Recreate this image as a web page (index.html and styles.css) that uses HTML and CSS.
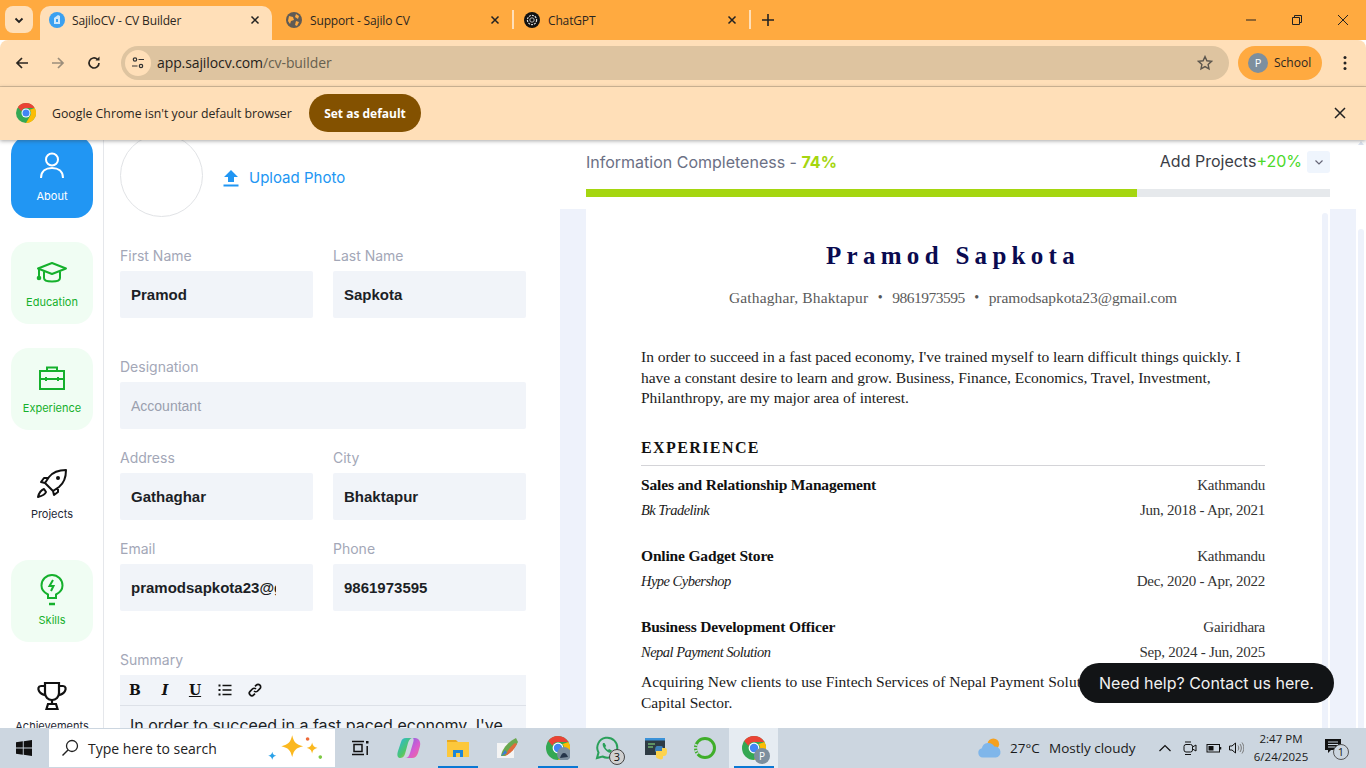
FILE: index.html
```html
<!DOCTYPE html>
<html lang="en">
<head>
<meta charset="utf-8">
<title>SajiloCV - CV Builder</title>
<link rel="stylesheet" href="styles.css">
</head>
<body>
<div class="app">
  <header class="tabstrip">
    <div class="tablist-btn"><svg width="12" height="12" viewBox="0 0 12 12"><path d="M2.5 4.5 6 8l3.5-3.5" fill="none" stroke="#222" stroke-width="1.8"/></svg></div>
    <div class="tab tab-active">
      <svg class="favicon" viewBox="0 0 16 16"><circle cx="8" cy="8" r="8" fill="#3aa0f0"/><path d="M5 12V6l4-3 2 1v8z" fill="#cfe8fb"/><path d="M7 7h2v3H7z" fill="#3aa0f0"/></svg>
      <span class="tab-title">SajiloCV - CV Builder</span>
      <svg class="tab-x" viewBox="0 0 10 10"><path d="M1.5 1.5l7 7M8.5 1.5l-7 7" stroke="#222" stroke-width="1.5"/></svg>
    </div>
    <div class="tab">
      <svg class="favicon" viewBox="0 0 16 16"><circle cx="8" cy="8" r="8" fill="#5f5b55"/><path d="M3 4l4 1 1 3-3 1-1 3-2-3zM10 2l3 2-1 3-3-2zM10 9l3 1-2 4-2-1z" fill="#ffaa40"/></svg>
      <span class="tab-title">Support - Sajilo CV</span>
      <svg class="tab-x" viewBox="0 0 10 10"><path d="M1.5 1.5l7 7M8.5 1.5l-7 7" stroke="#222" stroke-width="1.5"/></svg>
    </div>
    <span class="tab-sep"></span>
    <div class="tab">
      <svg class="favicon" viewBox="0 0 16 16"><circle cx="8" cy="8" r="8" fill="#111"/><circle cx="8" cy="8" r="4.6" fill="none" stroke="#ddd" stroke-width="1.2" stroke-dasharray="2 1"/><circle cx="8" cy="8" r="2.2" fill="none" stroke="#bbb"/></svg>
      <span class="tab-title">ChatGPT</span>
      <svg class="tab-x" viewBox="0 0 10 10"><path d="M1.5 1.5l7 7M8.5 1.5l-7 7" stroke="#222" stroke-width="1.5"/></svg>
    </div>
    <span class="tab-sep"></span>
    <svg class="new-tab" viewBox="0 0 12 12"><path d="M6 0v12M0 6h12" stroke="#222" stroke-width="1.6"/></svg>
    <div class="win-controls">
      <svg viewBox="0 0 12 12"><path d="M1 6h10" stroke="#222" stroke-width="1"/></svg>
      <svg viewBox="0 0 12 12"><path d="M1.5 3.5h7v7h-7zM3.5 3.5v-2h7v7h-2" fill="none" stroke="#222" stroke-width="1"/></svg>
      <svg viewBox="0 0 12 12"><path d="M1 1l10 10M11 1 1 11" stroke="#222" stroke-width="1"/></svg>
    </div>
  </header>

  <div class="toolbar">
    <svg class="tool-icon" viewBox="0 0 16 16"><path d="M14 8H3M8 3 3 8l5 5" fill="none" stroke="#2b2620" stroke-width="1.7"/></svg>
    <svg class="tool-icon" viewBox="0 0 16 16"><path d="M2 8h11M8 3l5 5-5 5" fill="none" stroke="#9c8e7b" stroke-width="1.7"/></svg>
    <svg class="tool-icon" viewBox="0 0 16 16"><path d="M13 8a5 5 0 1 1-1.6-3.7" fill="none" stroke="#2b2620" stroke-width="1.7"/><path d="M13.5 1.5v4h-4z" fill="#2b2620"/></svg>
    <div class="omnibox">
      <span class="site-btn"><svg width="14" height="14" viewBox="0 0 14 14"><circle cx="4" cy="3.5" r="1.7" fill="none" stroke="#333" stroke-width="1.2"/><path d="M7.5 3.5H13M1 10h5.5" stroke="#333" stroke-width="1.2"/><circle cx="10" cy="10" r="1.7" fill="none" stroke="#333" stroke-width="1.2"/></svg></span>
      <span class="url"><b>app.sajilocv.com</b>/cv-builder</span>
      <svg class="star" viewBox="0 0 16 16"><path d="M8 1.6l1.9 4.2 4.6.5-3.4 3.1.9 4.5L8 11.6l-4 2.3.9-4.5L1.5 6.3l4.6-.5z" fill="none" stroke="#5c564d" stroke-width="1.4"/></svg>
    </div>
    <div class="profile-chip"><span class="avatar-p">P</span><span>School</span></div>
    <svg class="kebab" viewBox="0 0 4 16"><circle cx="2" cy="2.5" r="1.5" fill="#222"/><circle cx="2" cy="8" r="1.5" fill="#222"/><circle cx="2" cy="13.5" r="1.5" fill="#222"/></svg>
  </div>

  <div class="infobar">
    <svg class="chrome-logo" viewBox="0 0 24 24"><circle cx="12" cy="12" r="12" fill="#34a853"/><path d="M12 0a12 12 0 0 1 10.4 6H12a6 6 0 0 0-5.6 3.8L2.2 5A12 12 0 0 1 12 0z" fill="#ea4335"/><path d="M22.4 6A12 12 0 0 1 12 24l5.2-9A6 6 0 0 0 16.5 8z" fill="#fbbc04"/><circle cx="12" cy="12" r="5.4" fill="#fff"/><circle cx="12" cy="12" r="4.2" fill="#4285f4"/></svg>
    <span class="info-text">Google Chrome isn't your default browser</span>
    <span class="default-btn">Set as default</span>
    <svg class="info-x" viewBox="0 0 12 12"><path d="M1 1l10 10M11 1 1 11" stroke="#222" stroke-width="1.5"/></svg>
  </div>

  <main class="main">
    <nav class="sidenav">
      <a class="nav-item nav-active">
        <svg viewBox="0 0 32 32"><circle cx="16" cy="9.5" r="6" fill="none" stroke="#fff" stroke-width="2"/><path d="M5 28c0-7 5-10 11-10s11 3 11 10" fill="none" stroke="#fff" stroke-width="2"/></svg>
        <span>About</span>
      </a>
      <a class="nav-item nav-done">
        <svg viewBox="0 0 32 32"><path d="M16 7 30 12.5 16 18 2 12.5z" fill="none" stroke="#15b02c" stroke-width="2" stroke-linejoin="round"/><path d="M8 15.5V22c0 2.5 4 3.5 8 3.5s8-1 8-3.500v-6.500" fill="none" stroke="#15b02c" stroke-width="2"/><path d="M3 13v7" stroke="#15b02c" stroke-width="2"/><circle cx="3" cy="22" r="2.3" fill="#15b02c"/></svg>
        <span>Education</span>
      </a>
      <a class="nav-item nav-done">
        <svg viewBox="0 0 32 32"><rect x="4" y="9" width="24" height="18" fill="none" stroke="#15b02c" stroke-width="2"/><path d="M11 9V5.5h10V9M4 17h24M10 15v4M22 15v4" fill="none" stroke="#15b02c" stroke-width="2"/></svg>
        <span>Experience</span>
      </a>
      <a class="nav-item">
        <svg viewBox="0 0 32 32"><path d="M30 2c-8 0-13 2-17 7l-4 6 8 8 6-4c5-4 7-9 7-17zM13 10H8l-3 4 4 1M22 19v5l-4 3-1-4" fill="none" stroke="#111" stroke-width="2" stroke-linejoin="round"/><circle cx="22" cy="10" r="2" fill="#111"/><path d="M8 21c-3 1-5 4-6 8 4-1 7-2 8-5z" fill="none" stroke="#111" stroke-width="2" stroke-linejoin="round"/></svg>
        <span>Projects</span>
      </a>
      <a class="nav-item nav-done">
        <svg viewBox="0 0 32 32"><path d="M12 24v-3.500C8 18.500 5.500 15 5.500 11.500a10.500 10.500 0 0 1 21 0c0 3.500-2.500 7-6.500 9V24z" fill="none" stroke="#15b02c" stroke-width="2"/><path d="M17 6l-3.500 6h4L15 17" fill="none" stroke="#15b02c" stroke-width="2"/><path d="M13 30h6" stroke="#15b02c" stroke-width="2.5"/></svg>
        <span>Skills</span>
      </a>
      <a class="nav-item">
        <svg viewBox="0 0 32 32"><path d="M9 3h14v10c0 4-3 7-7 7s-7-3-7-7z" fill="none" stroke="#111" stroke-width="2.2"/><path d="M9 6H5C2 6 2 9 3 11c1 2 4 4 6 4M23 6h4c3 0 3 3 2 5-1 2-4 4-6 4M16 20v4M12 24h8l1.5 5h-11z" fill="none" stroke="#111" stroke-width="2.2"/></svg>
        <span>Achievements</span>
      </a>
    </nav>

    <section class="form-col">
      <div class="photo-row">
        <div class="photo"></div>
        <div class="upload">
          <svg viewBox="0 0 16 18"><path d="M8 1 1 8h4v5h6V8h4zM.5 15.500h15v2H.5z" fill="#2196f3"/></svg>
          <span>Upload Photo</span>
        </div>
      </div>
      <div class="field-row">
        <div class="field"><label class="lbl">First Name</label><div class="val">Pramod</div></div>
        <div class="field"><label class="lbl">Last Name</label><div class="val">Sapkota</div></div>
      </div>
      <div class="field field-spaced"><label class="lbl">Designation</label><div class="val val-empty">Accountant</div></div>
      <div class="field-row">
        <div class="field"><label class="lbl">Address</label><div class="val">Gathaghar</div></div>
        <div class="field"><label class="lbl">City</label><div class="val">Bhaktapur</div></div>
      </div>
      <div class="field-row">
        <div class="field"><label class="lbl">Email</label><div class="val val-clip"><span>pramodsapkota23@gmail.com</span></div></div>
        <div class="field"><label class="lbl">Phone</label><div class="val">9861973595</div></div>
      </div>
      <div class="field field-spaced">
        <label class="lbl">Summary</label>
        <div class="editor">
          <div class="editor-tools">
            <span class="et et-b">B</span><span class="et et-i">I</span><span class="et et-u">U</span>
            <svg class="et-svg" viewBox="0 0 14 14"><path d="M4.5 2.5h9M4.500 7h9M4.500 11.500h9" stroke="#111" stroke-width="1.6"/><path d="M.5 2.500h2M.5 7h2M.5 11.500h2" stroke="#111" stroke-width="1.9"/></svg>
            <svg class="et-svg" viewBox="0 0 14 14"><path d="M6 8a2.500 2.500 0 0 0 3.600 0l2.300-2.300a2.500 2.500 0 0 0-3.600-3.600L7 3.400M8 6a2.500 2.500 0 0 0-3.600 0L2.100 8.300a2.500 2.500 0 0 0 3.600 3.600L7 10.600" fill="none" stroke="#111" stroke-width="1.7"/></svg>
          </div>
          <div class="editor-body">In order to succeed in a fast paced economy, I've</div>
        </div>
      </div>
    </section>

    <section class="preview">
      <div class="progress-head">
        <div class="progress-row">
          <div class="completeness">Information Completeness - <b>74%</b></div>
          <div class="next-step">
            <span>Add Projects</span><span class="plus">+20%</span>
            <span class="chev"><svg width="10" height="10" viewBox="0 0 10 10"><path d="M1.5 3.500 5 7l3.500-3.500" fill="none" stroke="#667" stroke-width="1.2"/></svg></span>
          </div>
        </div>
        <div class="bar"><div class="bar-fill" style="width:74%"></div></div>
      </div>
      <div class="paper-wrap">
        <article class="paper">
          <h1 class="cv-name">Pramod Sapkota</h1>
          <p class="cv-contact"><span class="c-addr">Gathaghar, Bhaktapur</span><i>•</i><span class="c-digits">9861973595</span><i>•</i><span class="c-mail">pramodsapkota23@gmail.com</span></p>
          <p class="cv-summary">In order to succeed in a fast paced economy, I've trained myself to learn difficult things quickly. I have a constant desire to learn and grow. Business, Finance, Economics, Travel, Investment, Philanthropy, are my major area of interest.</p>
          <h2 class="cv-section">EXPERIENCE</h2>
          <div class="job">
            <div class="job-line"><b>Sales and Relationship Management</b><span>Kathmandu</span></div>
            <div class="job-line"><em>Bk Tradelink</em><span>Jun, 2018 - Apr, 2021</span></div>
          </div>
          <div class="job">
            <div class="job-line"><b>Online Gadget Store</b><span>Kathmandu</span></div>
            <div class="job-line"><em>Hype Cybershop</em><span>Dec, 2020 - Apr, 2022</span></div>
          </div>
          <div class="job">
            <div class="job-line"><b>Business Development Officer</b><span>Gairidhara</span></div>
            <div class="job-line"><em>Nepal Payment Solution</em><span>Sep, 2024 - Jun, 2025</span></div>
            <p class="job-desc">Acquiring New clients to use Fintech Services of Nepal Payment Solution, focusing on the Banking and<br>Capital Sector.</p>
          </div>
          <div class="paper-scroll"></div>
        </article>
      </div>
      <a class="help-pill">Need help? Contact us here.</a>
    </section>
    <div class="page-scroll">
      <svg class="scroll-arrow" viewBox="0 0 8 5"><path d="M4 0l4 5H0z" fill="#dbe2f0"/></svg>
      <div class="page-thumb"></div>
    </div>
  </main>

  <footer class="taskbar">
    <svg class="win-logo" viewBox="0 0 16 16"><path d="M0 2.300 6.800 1.300V7.500H0zM7.700 1.200 16 0V7.500H7.700zM0 8.400H6.800V14.700L0 13.700zM7.700 8.400H16V16L7.700 14.800z" fill="#111"/></svg>
    <div class="searchbox">
      <svg class="search-ico" viewBox="0 0 18 18"><circle cx="11" cy="7" r="5.500" fill="none" stroke="#222" stroke-width="1.3"/><path d="M7 11 1.500 16.500" stroke="#222" stroke-width="1.5"/></svg>
      <span class="search-text">Type here to search</span>
      <svg class="sparkles" viewBox="0 0 64 32"><path d="M30 2c2 8 4 10 12 12-8 2-10 4-12 12-2-8-4-10-12-12 8-2 10-4 12-12z" fill="#fbb81f"/><path d="M52 10c1 4 2 5 6 6-4 1-5 2-6 6-1-4-2-5-6-6 4-1 5-2 6-6z" fill="#fbb81f"/><path d="M8 20c.7 3 1.500 3.800 4.500 4.500-3 .7-3.800 1.500-4.500 4.500-.7-3-1.500-3.800-4.500-4.500 3-.7 3.800-1.500 4.500-4.500z" fill="#2aa1e8"/><circle cx="47" cy="6" r="2" fill="#ee6a3a"/><circle cx="61" cy="26" r="2" fill="#7cc943"/></svg>
    </div>
    <div class="tb-icon">
      <svg viewBox="0 0 24 24"><path d="M4 5.500h12M4 18.500h12M6 8.500h8v7H6z" fill="none" stroke="#111" stroke-width="1.5"/><path d="M18 5h2.500v2.500H18z" fill="#111"/><path d="M19.200 10v9" stroke="#111" stroke-width="1.500"/></svg>
    </div>
    <div class="tb-icon">
      <svg viewBox="0 0 24 24"><defs><linearGradient id="cop" x1="0" y1="0" x2="1" y2="1"><stop offset="0" stop-color="#23b7e8"/><stop offset=".55" stop-color="#4fc66a"/><stop offset="1" stop-color="#f7c92e"/></linearGradient><linearGradient id="cop2" x1="0" y1="0" x2="1" y2="1"><stop offset="0" stop-color="#6d6be8"/><stop offset=".6" stop-color="#d85bd0"/><stop offset="1" stop-color="#f0708a"/></linearGradient></defs><path d="M9 2h7c-3 0-4 2-5 5L8 18c-1 3-3 4-5 4-3 0-3-4-2-7l3-9c1-3 2-4 5-4z" fill="url(#cop)"/><path d="M15 2h3c4 0 6 4 5 8l-2 7c-1 3-3 5-6 5H8c3 0 4-2 5-5l3-10c1-3 1-5-1-5z" fill="url(#cop2)"/></svg>
    </div>
    <div class="tb-icon tb-open">
      <svg viewBox="0 0 24 24"><path d="M1 4h9l2 2H1z" fill="#e8a820"/><rect x="1" y="6" width="22" height="15" fill="#fcc83c"/><path d="M7 21v-7h10v7h-3v-4h-4v4z" fill="#1b86d9"/></svg>
    </div>
    <div class="tb-icon tb-paint">
      <svg viewBox="0 0 24 24"><rect x="1" y="7" width="17" height="15" fill="#f4f4f4"/><path d="M5 20c1-7 7-14 15-18l2 4c-3 6-9 12-13 14z" fill="#6aa84f"/><path d="M9 20c2-5 6-10 10-13l2 1c-3 6-7 10-12 12z" fill="#e06a3a"/><path d="M5 20l4-6 2 3z" fill="#3e7bd6"/></svg>
    </div>
    <div class="tb-icon tb-open">
      <svg viewBox="0 0 24 24"><circle cx="12" cy="12" r="12" fill="#34a853"/><path d="M12 0a12 12 0 0 1 10.400 6H12a6 6 0 0 0-5.600 3.800L2.200 5A12 12 0 0 1 12 0z" fill="#ea4335"/><path d="M22.400 6A12 12 0 0 1 12 24l5.200-9A6 6 0 0 0 16.500 8z" fill="#fbbc04"/><circle cx="12" cy="12" r="5.400" fill="#fff"/><circle cx="12" cy="12" r="4.200" fill="#4285f4"/><circle cx="18" cy="18" r="7" fill="#7d8f9e"/><path d="M14 22c1-3 2-5 4-5s3 2 4 4z" fill="#26364a"/></svg>
    </div>
    <div class="tb-icon">
      <svg viewBox="0 0 24 24"><path d="M2 22l1.500-5.500A10 10 0 1 1 7.500 20.500z" fill="none" stroke="#2aa05a" stroke-width="2"/><path d="M8 7c-1 2 0 4 2 6.500s4 3.500 6 3l1-2-3-1.500-1 1c-1-.5-2-1.500-2.800-3l1-1L9.500 7z" fill="#2aa05a"/></svg>
      <span class="tb-badge">3</span>
    </div>
    <div class="tb-icon">
      <svg viewBox="0 0 24 24"><rect x="1" y="2" width="20" height="17" fill="#2e3b44"/><rect x="1" y="2" width="20" height="2.500" fill="#3a92d8"/><path d="M4 8h7M4 11h5" stroke="#6fb06f" stroke-width="1.3"/><path d="M13 10h4c2 0 2 2 2 2v3h-6c-1.500 0-2 1-2 2v1c0-4 0-8 2-8z" fill="#3c7fb8"/><path d="M12 15h6v-3h3c2 0 2 2 2 4s-1 4-3 4h-1v2c0 1-2 2-4 1s-3-1-3-3z" fill="#fcd34d"/></svg>
    </div>
    <div class="tb-icon">
      <svg viewBox="0 0 24 24"><circle cx="12" cy="12" r="9.500" fill="none" stroke="#3fae2a" stroke-width="3"/><circle cx="12" cy="12" r="9.500" fill="none" stroke="#ccd6e0" stroke-width="3.200" stroke-dasharray="1.500 1.500 1.500 1.500 1.500 1.500 1.500 50" transform="rotate(140 12 12)"/></svg>
    </div>
    <div class="tb-icon tb-open tb-current">
      <svg viewBox="0 0 24 24"><circle cx="12" cy="12" r="12" fill="#34a853"/><path d="M12 0a12 12 0 0 1 10.400 6H12a6 6 0 0 0-5.600 3.800L2.200 5A12 12 0 0 1 12 0z" fill="#ea4335"/><path d="M22.400 6A12 12 0 0 1 12 24l5.200-9A6 6 0 0 0 16.500 8z" fill="#fbbc04"/><circle cx="12" cy="12" r="5.400" fill="#fff"/><circle cx="12" cy="12" r="4.200" fill="#4285f4"/></svg>
      <span class="tb-p">P</span>
    </div>
    <div class="tray">
      <svg class="weather" viewBox="0 0 26 22"><circle cx="17" cy="7" r="6" fill="#f5a11f"/><path d="M6 21a5 5 0 0 1-1-9.800A7 7 0 0 1 18 9.500a5.800 5.800 0 0 1 1.500 11.500z" fill="#7fb6ea"/></svg>
      <span class="temp">27°C</span>
      <span class="cond">Mostly cloudy</span>
      <svg class="tray-ico tray-up" viewBox="0 0 14 14"><path d="M1.500 10 7 4.500 12.500 10" fill="none" stroke="#111" stroke-width="1.2"/></svg>
      <svg class="tray-ico" viewBox="0 0 16 16"><rect x="2" y="4.500" width="8.500" height="7.500" rx="2" fill="none" stroke="#111"/><path d="M10.500 7 14 5v6l-3.500-2M3 2h6M3 14.500h6" fill="none" stroke="#111"/></svg>
      <svg class="tray-ico tray-batt" viewBox="0 0 16 16"><rect x="1" y="4.500" width="12.500" height="7.500" fill="none" stroke="#111"/><rect x="2.500" y="6" width="5" height="4.500" fill="#111"/><path d="M14.500 7v2.500" stroke="#111" stroke-width="1.500"/></svg>
      <svg class="tray-ico tray-vol" viewBox="0 0 16 16"><path d="M1.500 6H4l3.500-3v10L4 10H1.500z" fill="none" stroke="#111"/><path d="M10 5.500c1 1.500 1 3.500 0 5M12 4c1.800 2.500 1.800 5.500 0 8M14 2.500c2.400 3.500 2.400 7.500 0 11" fill="none" stroke="#777"/></svg>
      <div class="clock"><span>2:47 PM</span><span>6/24/2025</span></div>
      <div class="notif">
        <svg viewBox="0 0 16 16"><path d="M0 1h16v11H6l-3 3v-3H0z" fill="#111"/><path d="M3 4h10M3 6.500h10M3 9h7" stroke="#ccd6e0"/></svg>
        <span class="notif-badge">1</span>
      </div>
    </div>
  </footer>
</div>
</body>
</html>
```
FILE: styles.css
```css
* { box-sizing: border-box; }
html, body { margin: 0; height: 100%; overflow: hidden; }
body { font-family: Inter, "Liberation Sans", sans-serif; background: #fff; color: #111; }
.app { display: flex; flex-direction: column; height: 768px; width: 1366px; }

/* tab strip */
.tabstrip { height: 40px; flex: none; background: #ffaa40; display: flex; align-items: flex-end; position: relative; font-family: "Open Sans", "Noto Sans", sans-serif; font-size: 12px; letter-spacing: -.15px; color: #2b2620; }
.tablist-btn { width: 28px; height: 27px; margin: 0 7px 7px 5px; border-radius: 8px; background: #ffdfb8; display: flex; align-items: center; justify-content: center; }
.tab { width: 235px; height: 34px; padding: 0 10px 6px 9px; display: flex; align-items: center; flex: none; }
.tab-active { background: #ffdfb8; border-radius: 10px 10px 0 0; width: 232px; margin-right: 5px; }
.favicon { width: 16px; height: 16px; margin-right: 8px; flex: none; }
.tab-active .favicon { margin-right: 7px; }
.tab-sep + .tab { padding-left: 10px; }
.tab-title { flex: 1; white-space: nowrap; overflow: hidden; }
.tab-x { width: 10px; height: 10px; flex: none; margin-right: 2px; }
.tab-sep { width: 2px; height: 19px; background: #ffdfb8; margin-bottom: 11px; flex: none; }
.new-tab { width: 12px; height: 12px; margin: 0 0 14px 11px; flex: none; }
.win-controls { margin-left: auto; display: flex; gap: 34px; padding-right: 17px; margin-bottom: 14px; }
.win-controls svg { width: 12px; height: 12px; }

/* toolbar */
.toolbar { height: 47px; flex: none; background: #ffdfb8; border-bottom: 1px solid #d8bd9b; display: flex; align-items: center; padding: 0 0 1px 14px; border-radius: 8px 8px 0 0; font-family: "Open Sans", "Noto Sans", sans-serif; }
.tool-icon { width: 16px; height: 16px; margin-right: 20px; flex: none; }
.tool-icon:nth-child(3) { margin-right: 19px; }
.omnibox { width: 1108px; height: 34px; background: #dec4a0; border-radius: 17px; display: flex; align-items: center; padding: 0 16px 0 4px; flex: none; }
.site-btn { width: 26px; height: 26px; border-radius: 50%; background: #ffdfb8; display: flex; align-items: center; justify-content: center; margin-right: 6px; flex: none; }
.url { font-size: 14px; color: #67604f; flex: 1; letter-spacing: -.1px; }
.url b { font-weight: 400; color: #26221b; }
.star { width: 16px; height: 16px; flex: none; }
.profile-chip { width: 84px; height: 34px; border-radius: 17px; background: #ffaa40; margin-left: 9px; display: flex; align-items: center; padding-left: 10px; gap: 6px; font-size: 12px; color: #2b2620; flex: none; }
.avatar-p { width: 20px; height: 20px; border-radius: 50%; background: #7d8f9e; color: #fff; display: flex; align-items: center; justify-content: center; font-size: 11px; }
.kebab { width: 4px; height: 16px; margin-left: 21px; flex: none; }

/* infobar */
.infobar { height: 53px; flex: none; background: #ffdfb8; display: flex; align-items: center; padding: 0 20px 1px 16px; box-shadow: 0 1px 4px rgba(60,60,60,.45); position: relative; z-index: 5; font-family: "Open Sans", "Noto Sans", sans-serif; font-size: 12.3px; color: #2b2620; }
.chrome-logo { width: 20px; height: 20px; margin-right: 16px; flex: none; }
.info-text { margin-right: 16px; white-space: nowrap; width: 241px; }
.default-btn { width: 112px; height: 38px; border-radius: 19px; background: #835100; color: #fff; font-weight: 700; font-size: 12px; display: flex; align-items: center; justify-content: center; }
.info-x { width: 12px; height: 12px; margin-left: auto; }

/* main */
.main { flex: 1; min-height: 0; display: flex; overflow: hidden; background: #fff; position: relative; }
.sidenav { width: 104px; flex: none; border-right: 1px solid #e5e7eb; padding: 0 10px 0 11px; margin-top: -4px; display: flex; flex-direction: column; gap: 24px; }
.nav-item { width: 82px; height: 82px; flex: none; border-radius: 18px; display: flex; flex-direction: column; align-items: center; justify-content: center; gap: 7px; padding-bottom: 1px; font-size: 11px; color: #1f2937; }
.nav-item svg { width: 32px; height: 32px; }
.nav-active { background: #2196f3; color: #fff; }
.nav-done { background: #f0fdf3; color: #15b02c; }

/* form */
.form-col { width: 456px; flex: none; padding: 0 34px 0 16px; margin-top: -6px; display: flex; flex-direction: column; gap: 20px; }
.photo-row { display: flex; align-items: center; margin-bottom: 10px; flex: none; }
.photo { width: 83px; height: 83px; border: 1px solid #e1e3e6; border-radius: 50%; flex: none; }
.upload { display: flex; align-items: center; gap: 10px; margin-left: 20px; font-size: 15px; color: #2196f3; padding-top: 4px; }
.upload svg { width: 16px; height: 18px; }
.field-row { display: flex; gap: 20px; flex: none; }
.field-row .field { flex: 1; min-width: 0; }
.field { flex: none; }
.field-spaced { margin-top: 20px; }
.lbl { display: block; font-size: 14px; line-height: 18px; color: #a3a7b7; margin-bottom: 6px; }
.val { height: 47px; background: #f1f4f9; border-radius: 2px; padding: 0 11px; display: flex; align-items: center; font-family: "Liberation Sans", Arial, sans-serif; font-size: 15px; font-weight: 700; color: #1c1f26; white-space: nowrap; overflow: hidden; }
.val-empty { font-weight: 400; color: #9a9fae; font-size: 14px; }
.val-clip { padding-right: 37px; }
.val-clip span { display: block; overflow: hidden; }
.editor { background: #f1f4f9; }
.editor-tools { height: 31px; border-bottom: 1px solid #dde1e8; display: flex; align-items: center; padding-left: 8px; gap: 16px; }
.et { font-family: "DejaVu Serif", serif; font-weight: 700; font-size: 14px; width: 14px; text-align: center; color: #111; }
.et-i { font-style: italic; }
.et-u { text-decoration: underline; }
.et-svg { width: 14px; height: 14px; }
.editor-body { padding: 7px 10px; font-size: 16px; line-height: 24px; color: #1c1f26; white-space: nowrap; overflow: hidden; }

/* preview */
.preview { flex: 1; min-width: 0; display: flex; flex-direction: column; position: relative; }
.progress-head { height: 69px; flex: none; padding: 0 26px; }
.progress-row { height: 44px; margin-bottom: 5px; display: flex; justify-content: space-between; align-items: center; }
.completeness { font-size: 16px; color: #6b7085; }
.completeness b { color: #a5d610; font-weight: 700; }
.next-step { display: flex; align-items: center; font-size: 16px; color: #3a3d46; }
.next-step > span:not(.chev) { position: relative; top: -1px; }
.plus { color: #4cd92a; margin-right: 5px; }
.chev { width: 23px; height: 22px; border-radius: 3px; background: #eff5fd; display: flex; align-items: center; justify-content: center; }
.bar { height: 8px; background: #e6e9ec; }
.bar-fill { height: 100%; background: #a5d610; }
.paper-wrap { flex: 1; min-height: 0; background: #eef2fb; display: flex; padding: 0 26px; overflow: hidden; }
.paper { width: 744px; flex: none; background: #fff; padding: 1px 65px 0 55px; overflow: hidden; font-family: "Liberation Serif", serif; color: #1a1a1a; position: relative; }
.paper-scroll { position: absolute; right: 2px; top: 4px; bottom: 0; width: 6px; border-radius: 3px 3px 0 0; background: #eef2fb; }
.cv-name { font-family: "Liberation Serif", serif; font-weight: 700; font-size: 25px; line-height: 30px; letter-spacing: 5.3px; color: #0a0a50; text-align: center; margin: 31px 0 0; }
.cv-contact { display: flex; justify-content: center; align-items: center; font-size: 15.500px; line-height: 20px; color: #5b5b5b; margin: 17px 0 0; white-space: nowrap; }
.cv-contact i { font-style: normal; font-size: 14px; width: 24px; text-align: center; color: #555; }
.c-addr { letter-spacing: .15px; }
.c-digits { letter-spacing: -.5px; }
.c-mail { letter-spacing: -.08px; }
.cv-summary { font-size: 15.500px; line-height: 20.500px; margin: 39px 0 0; color: #1a1a1a; letter-spacing: -.03px; }
.cv-section { font-size: 16px; line-height: 20px; letter-spacing: 1.4px; margin: 29px 0 0; padding-bottom: 7px; border-bottom: 1px solid #d4d4d8; color: #111; }
.job { margin-top: 9px; padding-bottom: 11px; }
.job-line { display: flex; justify-content: space-between; font-size: 15.500px; line-height: 20px; margin-bottom: 5.500px; color: #1a1a1a; }
.job-line span { font-size: 15px; letter-spacing: -.25px; color: #333; }
.job-line b { font-weight: 700; color: #111; letter-spacing: -.17px; }
.job-line em { font-size: 14.500px; letter-spacing: -.52px; }
.job-desc { font-size: 15.500px; line-height: 21px; margin: 9px 0 0; white-space: nowrap; }
.help-pill { position: absolute; left: 519px; top: 523px; width: 255px; height: 40px; border-radius: 20px; background: #121416; color: #f1f1f1; font-size: 16px; display: flex; align-items: center; justify-content: center; }
.page-scroll { width: 10px; flex: none; padding: 1px 2px 0; display: flex; flex-direction: column; align-items: center; }
.scroll-arrow { width: 6px; height: 4px; flex: none; }
.page-thumb { width: 6px; flex: 1; margin-top: 84px; border-radius: 3px 3px 0 0; background: #eef2fb; }

/* taskbar */
.taskbar { height: 40px; flex: none; background: #ccd6e0; display: flex; align-items: center; position: relative; z-index: 6; font-family: "Open Sans", "Noto Sans", sans-serif; color: #1a1a1a; }
.win-logo { width: 16px; height: 16px; margin: 0 17px 0 16px; flex: none; }
.searchbox { width: 286px; height: 38px; background: #fff; display: flex; align-items: center; padding-left: 12px; flex: none; }
.search-ico { width: 18px; height: 18px; margin-right: 9px; flex: none; }
.search-text { font-size: 14px; color: #222; width: 177px; white-space: nowrap; }
.sparkles { width: 58px; height: 30px; }
.tb-icon { width: 49px; height: 40px; flex: none; display: flex; align-items: center; justify-content: center; position: relative; }
.tb-icon svg { width: 24px; height: 24px; }
.tb-paint { margin: 0 1px; }
.tb-open::after { content: ""; position: absolute; left: 5px; right: 4px; bottom: 0; height: 2px; background: #0a78d4; }
.tb-current { background: #e6ecf2; }
.tb-badge { position: absolute; right: 6px; bottom: 3px; width: 16px; height: 16px; border-radius: 50%; background: #d0d0d0; border: 1px solid #444; font-size: 11px; line-height: 14px; text-align: center; color: #111; }
.tb-p { position: absolute; right: 8px; bottom: 4px; width: 16px; height: 16px; border-radius: 50%; background: #7d8f9e; color: #fff; font-size: 10px; line-height: 16px; text-align: center; }
.tray { margin-left: auto; display: flex; align-items: center; height: 40px; font-size: 13.500px; padding-right: 17px; }
.weather { width: 25px; height: 22px; margin-right: 8px; flex: none; }
.temp { width: 39px; white-space: nowrap; }
.cond { width: 109px; white-space: nowrap; }
.tray-ico { width: 16px; height: 16px; margin-right: 8px; flex: none; }
.tray-up { width: 14px; height: 14px; margin-right: 10px; }
.tray-batt { margin-right: 6px; }
.tray-vol { margin-right: 7px; }
.clock { display: flex; flex-direction: column; align-items: center; font-size: 11.500px; line-height: 18px; width: 60px; margin: 0 14px 0 0; }
.notif { position: relative; width: 24px; height: 24px; padding-top: 2px; }
.notif svg { width: 16px; height: 16px; display: block; }
.notif-badge { position: absolute; left: 8px; top: 8px; width: 16px; height: 16px; border-radius: 50%; background: #ccd6e0; border: 1px solid #555; font-size: 11px; line-height: 14px; text-align: center; }
```
